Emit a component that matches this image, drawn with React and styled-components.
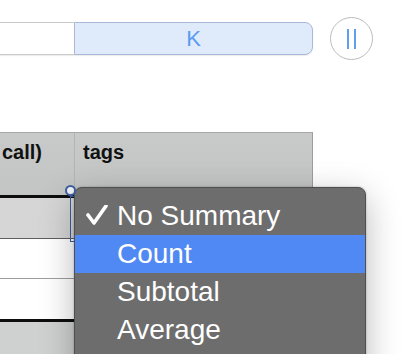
import React from "react";
import styled, { createGlobalStyle } from "styled-components";

const Global = createGlobalStyle`
  html, body { margin: 0; padding: 0; background: #fff; overflow: hidden; }
  body { font-family: "Liberation Sans", Arial, sans-serif; }
`;

const Page = styled.div`
  position: relative;
  width: 406px;
  height: 354px;
  overflow: hidden;
`;

const Toolbar = styled.div`
  display: flex;
  align-items: center;
  height: 43px;
  padding-top: 17px;
  gap: 17px;
`;

const Segmented = styled.div`
  display: flex;
  width: 313px;
  height: 33px;
  box-shadow: 0 1px 1px rgba(0, 0, 0, 0.08);
  border-radius: 0 8px 8px 0;
`;

const Segment = styled.div`
  box-sizing: border-box;
  display: flex;
  align-items: center;
  justify-content: center;
  height: 100%;
  width: ${(p) => p.$w}px;
  background: ${(p) => (p.$active ? "#dfeafb" : "#ffffff")};
  border: 1px solid ${(p) => (p.$active ? "#a8b8d6" : "#cacaca")};
  border-left: ${(p) => (p.$active ? "1px solid #a8b8d6" : "none")};
  border-right: ${(p) => (p.$active ? "1px solid #a8b8d6" : "none")};
  border-radius: ${(p) => (p.$active ? "0 8px 8px 0" : "0")};
  color: #5b9bef;
  font-size: 22px;
`;

const CircleButton = styled.div`
  box-sizing: border-box;
  width: 43px;
  height: 43px;
  border-radius: 50%;
  border: 1.5px solid #bcbcbc;
  background: #fff;
  display: flex;
  align-items: center;
  justify-content: center;
  gap: 5px;
`;

const Bar = styled.div`
  width: 2px;
  height: 20px;
  background: #5fa0ee;
`;

const Table = styled.div`
  margin-top: 72px;
  width: 313px;
  display: flex;
  flex-direction: column;
`;

const HeaderRow = styled.div`
  display: grid;
  grid-template-columns: 74px 239px;
  height: 63px;
  box-sizing: border-box;
  border-top: 1px solid #a7a7a7;
  background: linear-gradient(#c8caca, #c3c5c5);
`;

const HeaderCell = styled.div`
  box-sizing: border-box;
  padding: 8px 0 0 ${(p) => p.$pad}px;
  font-weight: bold;
  font-size: 20px;
  color: #111;
  border-left: ${(p) => (p.$divider ? "1px solid #b3b5b5" : "none")};
  border-right: ${(p) => (p.$edge ? "1px solid #9c9c9c" : "none")};
  white-space: nowrap;
  overflow: hidden;
`;

const Thick = styled.div`
  height: 3px;
  background: #0d0d0d;
`;

const Row = styled.div`
  display: grid;
  grid-template-columns: 74px 239px;
  height: ${(p) => p.$h}px;
  box-sizing: border-box;
  background: ${(p) => p.$bg};
  border-bottom: ${(p) => (p.$line ? `1px solid ${p.$line}` : "none")};
`;

const Footer = styled.div`
  height: 40px;
  background: #cfd0d0;
`;

const Selection = styled.div`
  position: absolute;
  left: 70px;
  top: 196px;
  width: 200px;
  height: 46px;
  box-sizing: border-box;
  border: 1.5px solid #3c5d9c;
`;

const Handle = styled.div`
  position: absolute;
  left: 65px;
  top: 185px;
  width: 11px;
  height: 11px;
  box-sizing: border-box;
  border-radius: 50%;
  border: 2px solid #3c5d9c;
  background: #e9ebee;
  z-index: 3;
`;

const Menu = styled.div`
  position: absolute;
  left: 74px;
  top: 187px;
  width: 292px;
  height: 200px;
  box-sizing: border-box;
  padding-top: 9px;
  background: #6d6d6d;
  border: 1px solid #4f4f4f;
  border-radius: 8px;
  box-shadow: 0 10px 34px rgba(0, 0, 0, 0.28), 0 0 2px rgba(0, 0, 0, 0.3);
  overflow: hidden;
  z-index: 2;
`;

const Item = styled.div`
  display: flex;
  align-items: center;
  height: 38px;
  background: ${(p) => (p.$hl ? "#5089f3" : "transparent")};
  color: #fff;
  font-size: 28px;
  white-space: nowrap;
`;

const CheckCol = styled.div`
  width: 42px;
  display: flex;
  align-items: center;
  padding-left: 11px;
  box-sizing: border-box;
`;

const items = ["No Summary", "Count", "Subtotal", "Average", ""];

export default function App() {
  return (
    <Page>
      <Global />
      <Toolbar>
        <Segmented>
          <Segment $w={74} />
          <Segment $w={239} $active>
            K
          </Segment>
        </Segmented>
        <CircleButton>
          <Bar />
          <Bar />
        </CircleButton>
      </Toolbar>
      <Table>
        <HeaderRow>
          <HeaderCell $pad={2}>call)</HeaderCell>
          <HeaderCell $pad={8} $divider $edge>
            tags
          </HeaderCell>
        </HeaderRow>
        <Thick />
        <Row $h={41} $bg="linear-gradient(90deg,#d6d6d6,#d2d2d2)" $line="#5e5e5e" />
        <Row $h={40} $bg="#ffffff" $line="#9d9d9d" />
        <Row $h={40} $bg="#ffffff" />
        <Thick />
        <Footer />
      </Table>
      <Selection />
      <Handle />
      <Menu>
        {items.map((t, i) => (
          <Item key={i} $hl={i === 1}>
            <CheckCol>
              {i === 0 && (
                <svg width="22" height="22" viewBox="0 0 22 22">
                  <polyline
                    points="2,10 8,18 20,1"
                    fill="none"
                    stroke="#fff"
                    strokeWidth="3.6"
                    strokeLinecap="round"
                    strokeLinejoin="round"
                  />
                </svg>
              )}
            </CheckCol>
            {t}
          </Item>
        ))}
      </Menu>
    </Page>
  );
}
